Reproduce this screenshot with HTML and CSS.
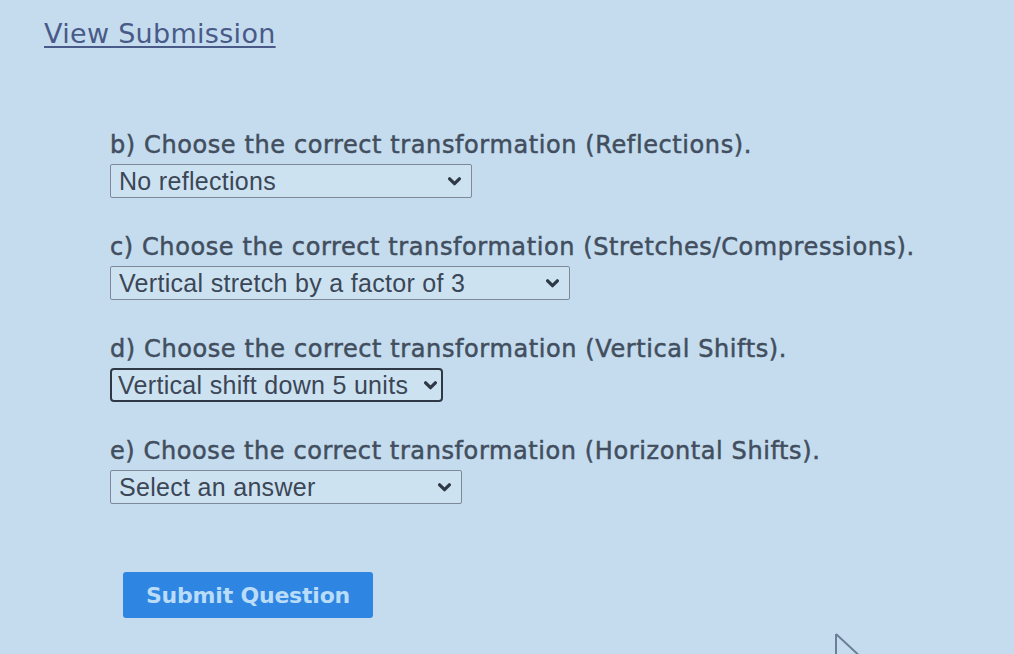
FILE: index.html
```html
<!DOCTYPE html>
<html>
<head>
<meta charset="utf-8">
<link rel="stylesheet" href="styles.css">
</head>
<body>
<div class="page">
  <a class="view-link" href="#">View Submission</a>
  <form class="questions">
    <div class="question">
      <div class="label">b) Choose the correct transformation (Reflections).</div>
      <div class="select w-b"><span>No reflections</span><svg class="chev" viewBox="0 0 12 8"><path d="M1.5 1.5 L6 6 L10.5 1.5" /></svg></div>
    </div>
    <div class="question">
      <div class="label">c) Choose the correct transformation (Stretches/Compressions).</div>
      <div class="select w-c"><span>Vertical stretch by a factor of 3</span><svg class="chev" viewBox="0 0 12 8"><path d="M1.5 1.5 L6 6 L10.5 1.5" /></svg></div>
    </div>
    <div class="question">
      <div class="label">d) Choose the correct transformation (Vertical Shifts).</div>
      <div class="select w-d focused"><span>Vertical shift down 5 units</span><svg class="chev" viewBox="0 0 12 8"><path d="M1.5 1.5 L6 6 L10.5 1.5" /></svg></div>
    </div>
    <div class="question">
      <div class="label">e) Choose the correct transformation (Horizontal Shifts).</div>
      <div class="select w-e"><span>Select an answer</span><svg class="chev" viewBox="0 0 12 8"><path d="M1.5 1.5 L6 6 L10.5 1.5" /></svg></div>
    </div>
    <div class="actions">
      <button type="button" class="submit">Submit Question</button>
    </div>
  </form>
</div>
<svg class="cursor" viewBox="0 0 40 30"><path d="M2 2 L2 30 M2 2 L30 28" /></svg>
</body>
</html>
```

FILE: styles.css
```css
html, body {
  margin: 0;
  padding: 0;
}
body {
  background: #c4dcee;
  width: 1014px;
  height: 654px;
  overflow: hidden;
  position: relative;
  font-family: "DejaVu Sans", Verdana, sans-serif;
  color: #424e5e;
}
.page {
  padding: 18px 0 0 44px;
}
.view-link {
  display: inline-block;
  font-size: 27px;
  line-height: 32px;
  color: #4a5a88;
  text-decoration: underline;
  text-decoration-thickness: 2px;
  text-underline-offset: 3px;
  letter-spacing: 0.3px;
}
.questions {
  margin: 81px 0 0 66px;
  display: flex;
  flex-direction: column;
}
.question {
  display: flex;
  flex-direction: column;
  align-items: flex-start;
  gap: 5px;
  margin-bottom: 35px;
}
.label {
  font-size: 24px;
  line-height: 28px;
  font-weight: 500;
  letter-spacing: 0.6px;
  -webkit-text-stroke: 0.5px #424e5e;
}
.select {
  box-sizing: border-box;
  height: 34px;
  display: flex;
  align-items: center;
  justify-content: space-between;
  background: #cde2f1;
  border: 1px solid #7d8898;
  border-radius: 2px;
  padding: 0 10px 0 8px;
  font-family: "Liberation Sans", Arial, sans-serif;
  font-size: 25px;
  letter-spacing: 0.3px;
  color: #3b4656;
}
.select.focused {
  border: 2px solid #2f3946;
  border-radius: 4px;
  padding: 0 4px 0 6px;
}
.w-b { width: 362px; }
.w-c { width: 460px; }
.w-d { width: 333px; }
.w-e { width: 352px; }
.chev {
  width: 13px;
  height: 9px;
  fill: none;
  stroke: #2f3946;
  stroke-width: 3;
  stroke-linecap: round;
  stroke-linejoin: round;
}
.actions {
  margin-top: 33px;
  padding-left: 13px;
}
.submit {
  width: 250px;
  height: 46px;
  background: #2f86e2;
  border: none;
  border-radius: 3px;
  color: #b9dcf8;
  font-family: "DejaVu Sans", Verdana, sans-serif;
  font-size: 22px;
  font-weight: bold;
  letter-spacing: -0.2px;
}
.cursor {
  position: absolute;
  left: 834px;
  top: 632px;
  width: 40px;
  height: 30px;
  fill: none;
  stroke: #6b7f96;
  stroke-width: 2;
}
```
